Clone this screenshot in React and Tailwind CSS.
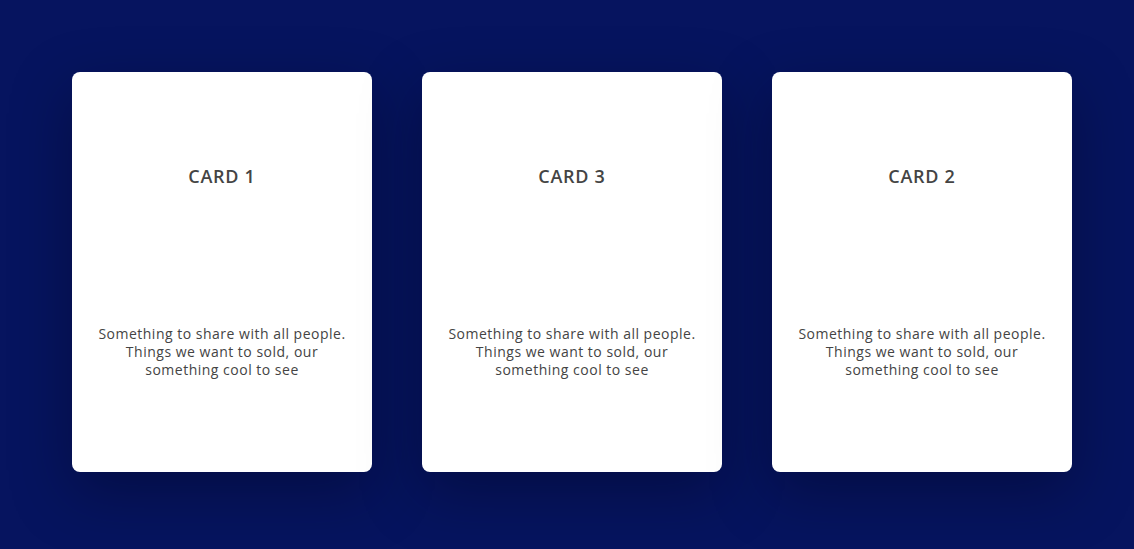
import React from 'react';

const cards = ['CARD 1', 'CARD 3', 'CARD 2'];

const App = () => {
  return (
    <div className="min-h-screen w-full bg-[#06145f] flex pl-[72px] pt-[72px] font-['Open_Sans',sans-serif]">
      <div className="flex gap-[50px]">
        {cards.map((title) => (
          <div
            key={title}
            className="w-[300px] h-[400px] bg-white rounded-[8px] shadow-[0_20px_60px_rgba(0,0,20,0.35)] flex flex-col items-center text-center"
          >
            <h2 className="mt-[93px] h-[22px] leading-[22px] text-[18px] font-semibold text-[#444444] tracking-[0.04em]">
              {title}
            </h2>
            <p className="mt-[138px] px-[10px] text-[14px] leading-[18px] text-[#444444] tracking-[0.5px]">
              Something to share with all people.
              <br />
              Things we want to sold, our
              <br />
              something cool to see
            </p>
          </div>
        ))}
      </div>
    </div>
  );
};

export default App;
